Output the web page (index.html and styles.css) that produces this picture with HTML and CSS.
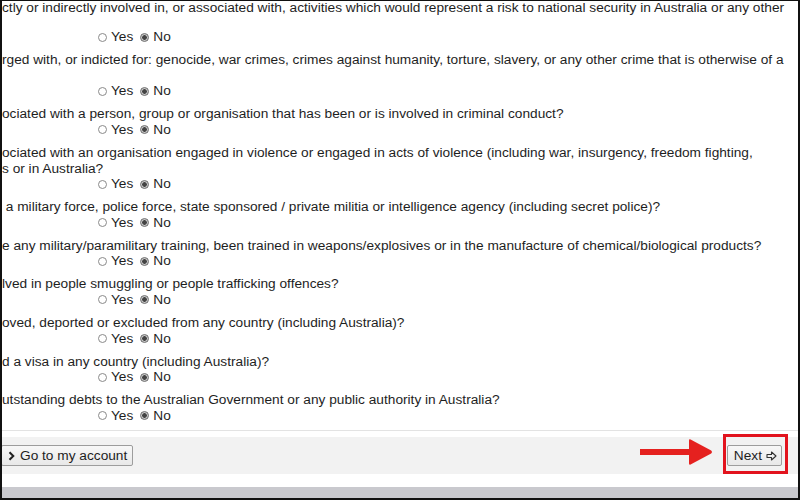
FILE: index.html
```html
<!DOCTYPE html>
<html>
<head>
<meta charset="utf-8">
<link rel="stylesheet" href="styles.css">
</head>
<body>
<div class="screen">
  <div class="questions">
    <div class="q">
      <div class="q-text">ctly or indirectly involved in, or associated with, activities which would represent a risk to national security in Australia or any other</div>
      <div class="q-text blank short">&nbsp;</div>
      <div class="answer"><span class="radio"></span><span class="lbl">Yes</span><span class="radio on"></span><span class="lbl">No</span></div>
    </div>
    <div class="q">
      <div class="q-text">rged with, or indicted for: genocide, war crimes, crimes against humanity, torture, slavery, or any other crime that is otherwise of a</div>
      <div class="q-text blank">&nbsp;</div>
      <div class="answer"><span class="radio"></span><span class="lbl">Yes</span><span class="radio on"></span><span class="lbl">No</span></div>
    </div>
    <div class="q">
      <div class="q-text">ociated with a person, group or organisation that has been or is involved in criminal conduct?</div>
      <div class="answer"><span class="radio"></span><span class="lbl">Yes</span><span class="radio on"></span><span class="lbl">No</span></div>
    </div>
    <div class="q">
      <div class="q-text">ociated with an organisation engaged in violence or engaged in acts of violence (including war, insurgency, freedom fighting,</div>
      <div class="q-text">s or in Australia?</div>
      <div class="answer"><span class="radio"></span><span class="lbl">Yes</span><span class="radio on"></span><span class="lbl">No</span></div>
    </div>
    <div class="q">
      <div class="q-text">&nbsp;a military force, police force, state sponsored / private militia or intelligence agency (including secret police)?</div>
      <div class="answer"><span class="radio"></span><span class="lbl">Yes</span><span class="radio on"></span><span class="lbl">No</span></div>
    </div>
    <div class="q">
      <div class="q-text">e any military/paramilitary training, been trained in weapons/explosives or in the manufacture of chemical/biological products?</div>
      <div class="answer"><span class="radio"></span><span class="lbl">Yes</span><span class="radio on"></span><span class="lbl">No</span></div>
    </div>
    <div class="q">
      <div class="q-text">lved in people smuggling or people trafficking offences?</div>
      <div class="answer"><span class="radio"></span><span class="lbl">Yes</span><span class="radio on"></span><span class="lbl">No</span></div>
    </div>
    <div class="q">
      <div class="q-text">oved, deported or excluded from any country (including Australia)?</div>
      <div class="answer"><span class="radio"></span><span class="lbl">Yes</span><span class="radio on"></span><span class="lbl">No</span></div>
    </div>
    <div class="q">
      <div class="q-text">d a visa in any country (including Australia)?</div>
      <div class="answer"><span class="radio"></span><span class="lbl">Yes</span><span class="radio on"></span><span class="lbl">No</span></div>
    </div>
    <div class="q">
      <div class="q-text">utstanding debts to the Australian Government or any public authority in Australia?</div>
      <div class="answer"><span class="radio"></span><span class="lbl">Yes</span><span class="radio on"></span><span class="lbl">No</span></div>
    </div>
  </div>
  <div class="footer">
    <button class="btn account"><svg class="chev" width="7" height="10" viewBox="0 0 7 10"><path d="M1.5 1.2 L5.3 5 L1.5 8.8" fill="none" stroke="#222" stroke-width="2"/></svg>Go to my account</button>
    <div class="next-wrap">
      <div class="pointer">
        <svg width="73" height="28" viewBox="0 0 73 28"><path d="M0 11 H51 V17 H0 Z" fill="#e5211f"/><path d="M49 2.5 Q49 0.8 50.6 1.6 L71.2 12.4 Q73 14 71.2 15.6 L50.6 26.4 Q49 27.2 49 25.5 Z" fill="#e5211f"/></svg>
      </div>
      <div class="highlight">
        <button class="btn next">Next <svg class="harrow" width="11" height="10" viewBox="0 0 11 10"><path d="M1 3.5 H5.5 V1 L10 5 L5.5 9 V6.5 H1 Z" fill="none" stroke="#333" stroke-width="1.1" stroke-linejoin="round"/></svg></button>
      </div>
    </div>
  </div>
  <div class="bottom-bar"></div>
</div>
</body>
</html>
```
FILE: styles.css
```css
html, body {
  margin: 0;
  padding: 0;
  background: #fff;
}
.screen {
  width: 800px;
  height: 500px;
  box-sizing: border-box;
  border-top: 1px solid #111;
  border-left: 2px solid #111;
  border-right: 2px solid #111;
  border-bottom: 2px solid #111;
  font-family: "Liberation Sans", Arial, sans-serif;
  font-size: 13.7px;
  color: #1e1e1e;
  display: flex;
  flex-direction: column;
  overflow: hidden;
  background: #fff;
}
.questions {
  margin-top: -1px;
  height: 430px;
  display: flex;
  flex-direction: column;
  gap: 7px;
}
.q-text {
  line-height: 15.6px;
  white-space: nowrap;
}
.q-text.short {
  line-height: 13.6px;
}
.answer {
  line-height: 16px;
  padding-left: 96px;
  display: flex;
  align-items: center;
}
.radio {
  width: 9px;
  height: 9px;
  border: 1px solid #8a8a8a;
  border-radius: 50%;
  box-sizing: border-box;
  margin-right: 4px;
  background: #fff;
}
.radio.on {
  margin-left: 7px;
  border-color: #6d6d6d;
  background: radial-gradient(circle, #444 0 2px, #c7c7c7 2.6px);
}
.footer {
  border-top: 1px solid #e3e3e3;
  padding-top: 6px;
  flex: 1;
  display: flex;
  align-items: flex-start;
  justify-content: space-between;
  background: linear-gradient(#fff 0 6px, #f2f2f2 6px 43px, #fff 43px);
}
.btn {
  font-family: "Liberation Sans", Arial, sans-serif;
  font-size: 13.7px;
  color: #1e1e1e;
  background: linear-gradient(#f8f8f8, #e8e8e8);
  border: 1px solid #9d9d9d;
  border-radius: 2px;
  height: 21px;
  padding: 0 5px 0 6px;
  display: flex;
  align-items: center;
  gap: 5px;
}
.btn.account {
  margin-top: 8px;
  margin-left: -1px;
}
.chev {
  margin-top: 1px;
}
.next-wrap {
  display: flex;
  align-items: center;
  margin-right: 10px;
  margin-top: -3px;
  gap: 10px;
}
.pointer {
  display: flex;
  margin-top: -5px;
}
.highlight {
  border: 3px solid #e2131d;
  padding: 8px 3px 5px 1px;
}
.btn.next {
  padding: 0 4px 0 6px;
  gap: 4px;
}
.bottom-bar {
  height: 11px;
  background: #c9c9ce;
}
```
